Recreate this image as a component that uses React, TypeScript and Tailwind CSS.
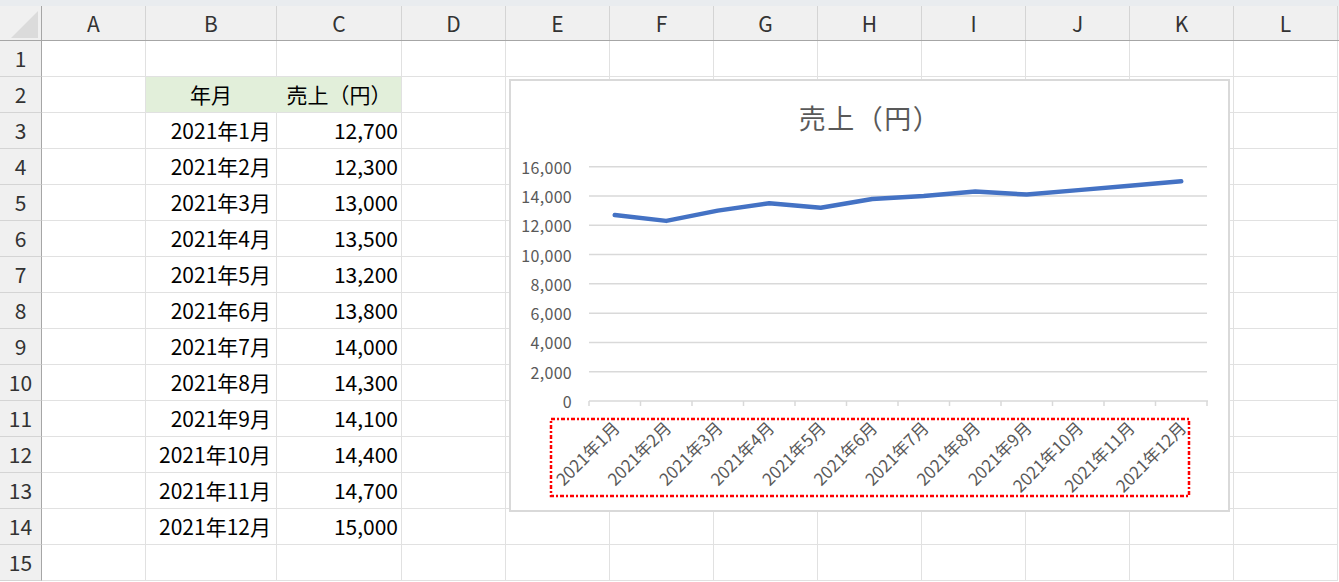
import React from "react";

const cols = [
  { l: "A", w: 104 },
  { l: "B", w: 131 },
  { l: "C", w: 125 },
  { l: "D", w: 104 },
  { l: "E", w: 104 },
  { l: "F", w: 104 },
  { l: "G", w: 104 },
  { l: "H", w: 104 },
  { l: "I", w: 104 },
  { l: "J", w: 104 },
  { l: "K", w: 104 },
  { l: "L", w: 104 },
];

const values = [12700, 12300, 13000, 13500, 13200, 13800, 14000, 14300, 14100, 14400, 14700, 15000];
const months = values.map((_, i) => `2021年${i + 1}月`);

const FONT = "font-['Noto_Sans_CJK_JP','Noto_Sans',sans-serif]";

function Chart() {
  const x0 = 589;
  const x1 = 1207;
  const yTop = 166.7;
  const yBot = 401;
  const cw = (x1 - x0) / 12;
  const yOf = (v: number) => yBot - (v / 16000) * (yBot - yTop);
  const pts = values.map((v, i) => `${x0 + cw * (i + 0.5)},${yOf(v)}`).join(" ");
  const ticks = [0, 2000, 4000, 6000, 8000, 10000, 12000, 14000, 16000];
  return (
    <div className="absolute left-[509px] top-[79px] w-[721px] h-[433px] border-2 border-[#d9d9d9] bg-white">
      <svg className="absolute inset-0" width="717" height="429" viewBox="511 81 717 429">
        <text
          x="870"
          y="117"
          textAnchor="middle"
          dominantBaseline="central"
          fontSize="27"
          fill="#595959"
          fontFamily="'Noto Sans CJK JP', sans-serif"
          letterSpacing="1.5"
        >
          売上（円）
        </text>
        {ticks.map((t) => (
          <g key={t}>
            {t > 0 && (
              <line x1={x0} x2={x1} y1={yOf(t)} y2={yOf(t)} stroke="#d9d9d9" strokeWidth="1.5" />
            )}
            <text
              x="572"
              y={yOf(t)}
              textAnchor="end"
              dominantBaseline="central"
              fontSize="16"
              fill="#595959"
              fontFamily="'Noto Sans CJK JP', sans-serif"
              letterSpacing="0.3"
            >
              {t.toLocaleString("en-US")}
            </text>
          </g>
        ))}
        <line x1={x0} x2={x1 + 1} y1={yBot} y2={yBot} stroke="#d9d9d9" strokeWidth="1.5" />
        {Array.from({ length: 13 }).map((_, i) => (
          <line
            key={i}
            x1={x0 + cw * i}
            x2={x0 + cw * i}
            y1={yBot}
            y2={yBot + 5}
            stroke="#d9d9d9"
            strokeWidth="1.5"
          />
        ))}
        <polyline
          points={pts}
          fill="none"
          stroke="#4472c4"
          strokeWidth="4.5"
          strokeLinecap="round"
          strokeLinejoin="round"
        />
        {months.map((m, i) => {
          const cx = x0 + cw * (i + 0.5) + 1;
          const cy = 424;
          return (
            <text
              key={m}
              x={cx}
              y={cy}
              textAnchor="end"
              dominantBaseline="central"
              fontSize="17"
              fill="#595959"
              fontFamily="'Noto Sans CJK JP', sans-serif"
              transform={`rotate(-45 ${cx} ${cy})`}
            >
              {m}
            </text>
          );
        })}
        <rect
          x="551"
          y="419"
          width="638"
          height="77"
          fill="none"
          stroke="#ff0000"
          strokeWidth="2.5"
          strokeDasharray="4 2 2 2"
        />
      </svg>
    </div>
  );
}

export default function App() {
  const rows = Array.from({ length: 15 }, (_, i) => i + 1);
  const cellContent = (r: number, c: number): React.ReactNode => {
    if (r === 2 && c === 1) return <span className="block w-full text-center">年月</span>;
    if (r === 2 && c === 2) return <span className="block w-full text-center">売上（円）</span>;
    if (r >= 3 && r <= 14) {
      const i = r - 3;
      if (c === 1) return <span className="block w-full text-right pr-[5px]">{months[i]}</span>;
      if (c === 2) return <span className="block w-full text-right pr-[3px]">{values[i].toLocaleString("en-US")}</span>;
    }
    return null;
  };
  return (
    <div className={`relative w-[1339px] h-[582px] overflow-hidden bg-white ${FONT}`}>
      <div className="h-[6px] bg-[#e9ecef]" />
      {/* header row */}
      <div className="flex h-[35px] bg-[#f0f0f0] border-b-[1.5px] border-[#a6a6a6]">
        <div className="relative w-[42px] shrink-0 border-r-[1.5px] border-[#a6a6a6]">
          <svg className="absolute left-0 top-0" width="42" height="35">
            <polygon points="11,32 38,5 38,32" fill="#dbdbdb" />
          </svg>
        </div>
        {cols.map((c) => (
          <div
            key={c.l}
            style={{ width: c.w }}
            className="shrink-0 border-r border-[#d4d4d4] flex items-center justify-center text-[21px] text-[#333] pt-[1px]"
          >
            {c.l}
          </div>
        ))}
      </div>
      {rows.map((r) => (
        <div key={r} className="flex h-[36px]">
          <div className="w-[42px] shrink-0 bg-[#f0f0f0] border-r-[1.5px] border-b border-r-[#a6a6a6] border-b-[#d4d4d4] flex items-center justify-center text-[21px] text-[#333]">
            {r}
          </div>
          {cols.map((c, ci) => {
            const green = r === 2 && (ci === 1 || ci === 2);
            return (
              <div
                key={c.l}
                style={{ width: c.w }}
                className={`shrink-0 border-b border-[#e1e1e1] flex items-center text-[21px] text-black ${
                  green ? "bg-[#e2efda]" : ""
                } ${green && ci === 1 ? "border-r border-r-[#e2efda]" : "border-r border-r-[#e1e1e1]"}`}
              >
                {cellContent(r, ci)}
              </div>
            );
          })}
        </div>
      ))}
      <Chart />
    </div>
  );
}
